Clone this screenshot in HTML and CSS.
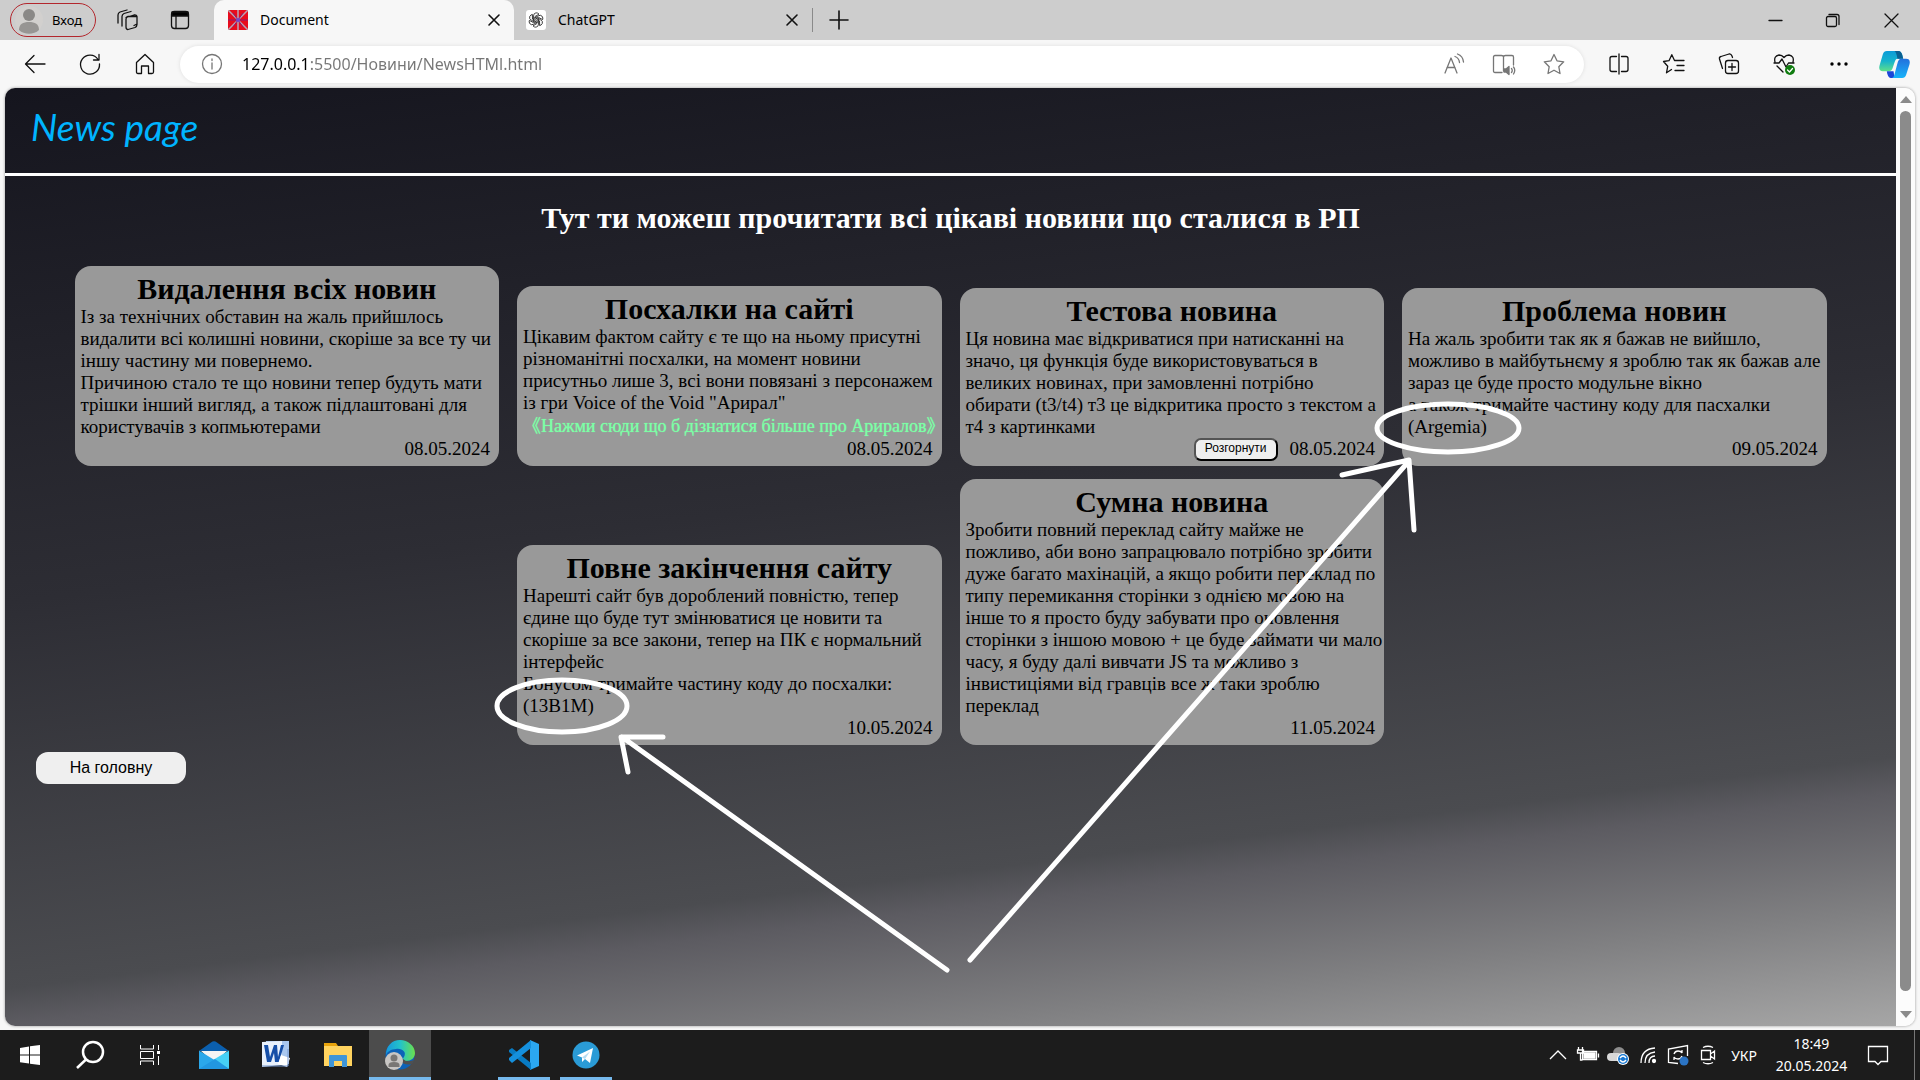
FILE: index.html
```html
<!DOCTYPE html>
<html lang="uk">
<head>
<meta charset="utf-8">
<title>Document</title>
<link rel="stylesheet" href="styles.css">
</head>
<body>
<header class="tabbar">
  <button class="profile"><svg class="avatar" viewBox="0 0 28 28"><circle cx="14" cy="14" r="14" fill="#d2d0ce"/><circle cx="14" cy="9" r="6" fill="#8a8886"/><path d="M4 24c0-6 4-8 10-8s10 2 10 8c-5 5-15 5-20 0z" fill="#979593"/></svg>Вход</button>
  <button class="tab-tool" aria-label="Workspaces"><svg class="icon" viewBox="0 0 24 24"><path d="M10 9.500l8-2.500q3-.5 3 2v7l-3 1.500M2 15V7q0-2 2-3l7-2M6 18V8.500q0-2 2-3l7-2M10 19v-8q0-2 2-2.500h4l5 0v8q0 2-2 3l-7 2q-2 0-2-2.500z"/></svg></button>
  <button class="tab-tool" aria-label="Tab actions"><svg class="icon" viewBox="0 0 24 24"><rect x="3.500" y="3.500" width="17" height="17" rx="3"/><path d="M4 4h16v4H4z" fill="#000"/><path d="M8 8v12"/></svg></button>
  <div class="tab active"><svg class="favicon" viewBox="0 0 20 20"><path d="M0 0h20v20H0z" fill="#e80c1c"/><path d="M0 0l20 20M20 0L0 20M10 0v20" stroke="#b9a5b5" stroke-width="1.500"/><path d="M0 10h20M5 3l10 14M15 3L5 17" stroke="#8b1d70" stroke-width="1"/><circle cx="10" cy="10" r="2" fill="#7545c8"/></svg><span class="tab-name">Document</span><button class="tab-close" aria-label="Close tab"><svg class="icon bold" viewBox="0 0 24 24"><path d="M7 7l10 10M17 7L7 17"/></svg></button></div>
  <div class="tab"><svg class="favicon" viewBox="0 0 20 20"><rect width="20" height="20" rx="3" fill="#fff"/><g fill="none" stroke="#222" stroke-width=".8"><path id="petal" d="M7.500 11V6q0-2.800 2.500-3.200 2 0 3 1.300L9 6.500V10"/><use href="#petal" transform="rotate(60 10 10)"/><use href="#petal" transform="rotate(120 10 10)"/><use href="#petal" transform="rotate(180 10 10)"/><use href="#petal" transform="rotate(240 10 10)"/><use href="#petal" transform="rotate(300 10 10)"/></g></svg><span class="tab-name">ChatGPT</span><button class="tab-close" aria-label="Close tab"><svg class="icon bold" viewBox="0 0 24 24"><path d="M7 7l10 10M17 7L7 17"/></svg></button></div>
  <button class="new-tab" aria-label="New tab"><svg class="icon bold" viewBox="0 0 24 24"><path d="M12 3v18M3 12h18"/></svg></button>
  <div class="window-controls">
    <button aria-label="Minimize"><svg class="icon" viewBox="0 0 24 24"><path d="M6 12.500h13"/></svg></button>
    <button aria-label="Restore"><svg class="icon" viewBox="0 0 24 24"><rect x="5.500" y="8.500" width="10" height="10" rx="1.500"/><path d="M8 6.500h8q2 0 2 2v8"/></svg></button>
    <button aria-label="Close"><svg class="icon" viewBox="0 0 24 24"><path d="M6 6l13 13M19 6L6 19"/></svg></button>
  </div>
</header>

<nav class="toolbar">
  <button aria-label="Back"><svg class="icon" viewBox="0 0 24 24"><path d="M22 12H3M11 3.500L2.500 12l8.500 8.500"/></svg></button>
  <button aria-label="Refresh"><svg class="icon" viewBox="0 0 24 24"><path d="M20 7.500A9.500 9.500 0 1 0 21.500 12M21 2.500V8h-5.500"/></svg></button>
  <button aria-label="Home"><svg class="icon" viewBox="0 0 24 24"><path d="M3.500 10.500L12 2.500l8.500 8V20q0 1.500-1.500 1.500h-3.500V14h-7v7.500H5Q3.500 21.500 3.500 20z"/></svg></button>
  <div class="omnibox">
    <svg class="icon muted" viewBox="0 0 24 24"><circle cx="12" cy="12" r="9.500"/><path d="M12 11v6M12 7v1.500"/></svg>
    <input class="address" type="text" aria-label="Address" value="127.0.0.1:5500/Новини/NewsHTMl.html">
    <div class="omni-actions">
      <button aria-label="Read aloud"><svg class="icon muted" viewBox="0 0 24 24"><path d="M3 21L9 6l6 15M5 15.500h8M13 4.500q4 1.500 4.500 6M15.500 2q5.500 2 6 8"/></svg></button>
      <button aria-label="Immersive reader"><svg class="icon muted" viewBox="0 0 24 24"><path d="M10 20.500H3q-1.500 0-1.500-1.500V5Q1.500 3.500 3 3.500h6.500q2 0 2 1.500v14M11.500 5q0-1.500 2-1.500H20q1.500 0 1.500 1.500v8M19.500 16.500q1.500 2 0 4M21.500 15q2.500 3 0 7"/><path d="M12 17h2l3-2.500v8L14 20h-2z" fill="#767676"/></svg></button>
      <button aria-label="Favourite"><svg class="icon muted" viewBox="0 0 24 24"><path d="M12 2.500l3 6.300 6.700 1-4.900 4.900 1.200 6.800-6-3.300-6 3.300 1.200-6.800-4.900-4.900 6.700-1z"/></svg></button>
    </div>
  </div>
  <button aria-label="Split screen"><svg class="icon" viewBox="0 0 24 24"><path d="M9.500 4.500H5Q3 4.500 3 6.500v11q0 2 2 2h4.500M14.500 4.500H19q2 0 2 2v11q0 2-2 2h-4.500M12 2v20"/></svg></button>
  <button aria-label="Favourites"><svg class="icon" viewBox="0 0 24 24"><path d="M9.500 17.500L4.500 20.800l1.200-6.500L1.500 9.500l5.500-.8 2.800-6 2.700 5.800H22M15 13.500h7M13 18.500h9"/></svg></button>
  <button aria-label="Collections"><svg class="icon" viewBox="0 0 24 24"><rect x="8.500" y="8.500" width="13" height="13" rx="2.500"/><path d="M15 11.500v7M11.500 15h7M5.500 16.500L2.500 7q-.5-2 1.500-2.500l8-2.500q2-.5 3 2l.5 1.500"/></svg></button>
  <button aria-label="Browser essentials"><svg class="icon" viewBox="0 0 24 24"><path d="M3 10Q1.500 4 7 3q3 0 5 2.500Q14 3 17 3q5.500 1 4 7M2 11h5l3-4 4 8 2.500-4H22M5 14l6 6"/><circle cx="18" cy="18" r="5" fill="#107c10" stroke="none"/><path d="M15.500 18l2 2 3-3.500" stroke="#fff"/></svg></button>
  <button aria-label="More"><svg class="icon" viewBox="0 0 24 24"><g fill="#000" stroke="none"><circle cx="5" cy="12" r="1.700"/><circle cx="12" cy="12" r="1.700"/><circle cx="19" cy="12" r="1.700"/></g></svg></button>
  <button aria-label="Copilot"><svg class="copilot" viewBox="0 0 32 28"><defs><linearGradient id="cp1" x2="0" y2="1"><stop stop-color="#0b9bd8"/><stop offset=".5" stop-color="#16b3cc"/><stop offset="1" stop-color="#5fe08a"/></linearGradient><linearGradient id="cp2" x2="0" y2="1"><stop stop-color="#2470dc"/><stop offset="1" stop-color="#18b4fa"/></linearGradient></defs><path d="M8 0h12q3 0 4 4l1 4h-6q-2 0-3 4l-2 6q-1 3-4 3H4q-5 0-3.500-6L4 3Q5 0 8 0z" fill="url(#cp1)"/><path d="M16 0h4q3 0 4 4l1 4h-6q-1-7-3-8z" fill="#0a6091"/><path d="M8 21h7l1 7h-4q-3 0-4-7z" fill="#1b46d8"/><path d="M24 28H13q2 0 3-4l3-11q1-5 4-5h5q5 0 3.500 6L28 25q-1 3-4 3z" fill="url(#cp2)"/></svg></button>
</nav>

<div class="frame">
  <main class="site">
    <header class="site-header"><a class="logo" href="#">News page</a></header>
    <h1 class="headline">Тут ти можеш прочитати всі цікаві новини що сталися в РП</h1>
    <section class="news">
      <article class="card"><h2>Видалення всіх новин</h2>
        <p>Із за технічних обставин на жаль прийшлось видалити всі колишні новини, скоріше за все ту чи іншу частину ми повернемо.<br>Причиною стало те що новини тепер будуть мати трішки інший вигляд, а також підлаштовані для користувачів з копмьютерами</p>
        <footer class="meta"><time>08.05.2024</time></footer></article>
      <article class="card"><h2>Посхалки на сайті</h2>
        <p>Цікавим фактом сайту є те що на ньому присутні різноманітні посхалки, на момент новини присутньо лише 3, всі вони повязані з персонажем із гри Voice of the Void "Арирал"</p>
        <a class="more" href="#">《Нажми сюди що б дізнатися більше про Ариралов》</a>
        <footer class="meta"><time>08.05.2024</time></footer></article>
      <article class="card"><h2>Тестова новина</h2>
        <p>Ця новина має відкриватися при натисканні на значо, ця функція буде використовуваться в великих новинах, при замовленні потрібно<br>обирати (t3/t4) т3 це відкритика просто з текстом а т4 з картинками</p>
        <footer class="meta"><button class="expand">Розгорнути</button><time>08.05.2024</time></footer></article>
      <article class="card"><h2>Проблема новин</h2>
        <p>На жаль зробити так як я бажав не вийшло, можливо в майбутьнєму я зроблю так як бажав але зараз це буде просто модульне вікно<br>а також тримайте частину коду для пасхалки (Argemia)</p>
        <footer class="meta"><time>09.05.2024</time></footer></article>
      <article class="card"><h2>Повне закінчення сайту</h2>
        <p>Нарешті сайт був дороблений повністю, тепер єдине що буде тут змінюватися це новити та скоріше за все закони, тепер на ПК є нормальний інтерфейс<br>Бонусом тримайте частину коду до посхалки: (13B1M)</p>
        <footer class="meta"><time>10.05.2024</time></footer></article>
      <article class="card"><h2>Сумна новина</h2>
        <p>Зробити повний переклад сайту майже не<br>пожливо, аби воно запрацювало потрібно зробити<br>дуже багато махінацій, а якщо робити переклад по<br>типу перемикання сторінки з однією мовою на<br>інше то я просто буду забувати про оновлення<br>сторінки з іншою мовою + це буде займати чи мало<br>часу, я буду далі вивчати JS та можливо з<br>інвистиціями від гравців все ж таки зроблю<br>переклад</p>
        <footer class="meta"><time>11.05.2024</time></footer></article>
    </section>
    <button class="home">На головну</button>
  </main>
  <div class="scrollbar"><span class="arrow-up"></span><span class="thumb"></span><span class="arrow-down"></span></div>
</div>

<svg class="marks" viewBox="0 0 1920 1080"><g fill="none" stroke="#fff" stroke-width="5" stroke-linecap="round" stroke-linejoin="round"><ellipse cx="1448" cy="428" rx="71" ry="24"/><ellipse cx="562" cy="706" rx="65" ry="26"/><path d="M947 970L622 737M663 737h-42l7 35M970 960L1409 461M1342 475l67-15 5 70"/></g></svg>

<footer class="taskbar">
  <button class="sys" aria-label="Start"><svg viewBox="0 0 30 30"><path d="M5 8l9-1.500V14.500H5zM15 6.300L25 5v9.500H15zM5 15.500h9v8L5 22.300zM15 15.500h10V25l-10-1.300z" fill="#fff"/></svg></button>
  <button class="sys" aria-label="Search"><svg viewBox="0 0 30 30"><circle cx="18" cy="12" r="10" fill="none" stroke="#fff" stroke-width="2.500"/><path d="M11 19.500L2 28" stroke="#fff" stroke-width="2.500"/></svg></button>
  <button class="sys" aria-label="Task view"><svg viewBox="0 0 30 30"><path d="M5.500 5v4h13V5M5.500 25v-4h13v4M5.500 11.500h13v7h-13zM23.500 5v5M23.500 16v9" fill="none" stroke="#fff"/><path d="M22 11h3v3h-3z" fill="#fff"/></svg></button>
  <div class="apps">
    <button aria-label="Mail"><svg viewBox="0 0 30 30"><path d="M0 11L12 2.500Q15 0 18 2.500L30 11z" fill="#0b5fae"/><path d="M2 11h26L15 23z" fill="#f4f4f4"/><path d="M0 10.500L30 29H0z" fill="#2ba7ea"/><path d="M30 10.500V29L14 20z" fill="#46d0f5"/><path d="M0 29l16-10 14 10z" fill="#2297e0"/></svg></button>
    <button aria-label="Word"><svg viewBox="0 0 30 30"><path d="M5 1h23v23H5z" fill="#a9c7ef"/><path d="M1 2l20-1v24L1 27z" fill="#e9f1fc"/><path d="M3 5h4l2 12 4-12h3l1 12 3-12h3l-5 17h-4l-1-9-3 9H6z" fill="#164fa8"/><path d="M20 15l9 3-3 9-9-3z" fill="#fff"/><path d="M1 26h26V9" fill="none" stroke="#7396cf"/></svg></button>
    <button aria-label="Explorer"><svg viewBox="0 0 30 30"><path d="M1 3h12l2 3h14v18H1z" fill="#e8a30c"/><path d="M1 6h28v20H1z" fill="#ffd35f"/><path d="M6 27V16q0-1 1-1h16q1 0 1 1v11h-5v-6h-8v6z" fill="#3f95d7"/></svg></button>
    <button class="current" aria-label="Edge"><svg viewBox="0 0 30 30"><defs><linearGradient id="ed"><stop stop-color="#1797dd"/><stop offset=".5" stop-color="#24c3c8"/><stop offset="1" stop-color="#6be04c"/></linearGradient></defs><circle cx="15" cy="15" r="14.500" fill="#0c62b8"/><path d="M1 15C1 6 7 0 15 0s15 6 15 13c0 5-4 8-9 8-3 0-4-2-2-4 3-5-2-9-8-8-5 0-9 3-10 6z" fill="url(#ed)"/><path d="M18 19q4 4 11 1l-2 4q-8 2-12-4z" fill="#505050"/><circle cx="9" cy="21" r="9" fill="#c8c6c4"/><circle cx="9" cy="18" r="3.500" fill="#797775"/><path d="M3.500 27v-2q0-3 5.500-3t5.500 3v2z" fill="#797775"/></svg></button>
    <button class="idle" aria-label="Empty slot" disabled></button>
    <button class="running" aria-label="Visual Studio Code"><svg viewBox="0 0 30 30"><path d="M21 0L30 4v22l-9 4z" fill="#2ba7f1"/><path d="M0 10l3-2 19 15v7L0 12z" fill="#087bc3"/><path d="M0 20l3 3L22 8V0L0 18z" fill="#1590dd"/></svg></button>
    <button class="running" aria-label="Telegram"><svg viewBox="0 0 30 30"><circle cx="15" cy="15" r="13.500" fill="#2a9bd6"/><path d="M6 15.500L22 8l-3 15-5-4-3 3v-4.500z" fill="#fff"/><path d="M11 17.500l8-6-5 7.500z" fill="#b6dcf2"/></svg></button>
  </div>
  <div class="tray">
    <svg viewBox="0 0 24 24"><path d="M4 16l8-8 8 8"/></svg>
    <svg viewBox="0 0 24 24"><path d="M6.500 8.500h14v8h-14zM2.500 4v3M6.500 4v3M1.500 7h6v3h-6zM4.500 10v7h2M22.500 10.500v4"/><path d="M8 10h11v5H8z" fill="#fff"/></svg>
    <svg viewBox="0 0 24 24"><g stroke="none"><circle cx="13" cy="10" r="6" fill="#8e8e8e"/><rect x="1" y="10" width="15" height="8" rx="4" fill="#d8d8d8"/><circle cx="17" cy="16" r="6" fill="#fff"/><circle cx="17" cy="16" r="5" fill="#1677d2"/></g><path d="M14 15q3-4 6 0M20 17q-3 4-6 0"/></svg>
    <svg viewBox="0 0 24 24"><path d="M5 20Q5 6 19 5M9 20q0-10 10-11M13 20q0-7 6-7"/><circle cx="18" cy="18" r="1.500" fill="#fff"/></svg>
    <svg viewBox="0 0 24 24"><path d="M12 20.500l-9.500-1V6l19-3.500V13M8 11q1-3 4-3t4 2V7M16 13q-1 3-4 3t-4-2v3"/><circle cx="18" cy="18" r="4.500" fill="#2b74c4" stroke="none"/></svg>
    <svg viewBox="0 0 24 24"><path d="M5.500 7.500h9v9h-9zM14.500 11l4-3v8l-4-3M7 4.500Q12 2 17 4.500M7 19.500q5 2.500 10 0"/></svg>
    <span class="lang">УКР</span>
    <div class="clock"><time>18:49</time><time>20.05.2024</time></div>
    <svg class="notice" viewBox="0 0 24 24"><path d="M2.500 3.500h19v15H15l-3 3-3-3H2.500z"/></svg>
  </div>
</footer>
</body>
</html>
```
FILE: styles.css
```css
* { box-sizing: border-box; }
body {
  margin: 0;
  min-height: 100vh;
  display: flex;
  flex-direction: column;
  position: relative;
  background: #f7f7f7;
  color: #000;
  font-family: "Liberation Serif", "Noto Sans CJK JP", serif;
}
button { padding: 0; border: 0; background: none; color: inherit; font: inherit; }
svg { display: block; flex: none; }
p, h1, h2 { margin: 0; }
.icon { width: 24px; height: 24px; fill: none; stroke: #111; stroke-width: 1.3; stroke-linejoin: round; stroke-linecap: round; }
.muted { stroke: #767676; }
.bold { stroke-width: 1.6; }

.tabbar, .toolbar, .taskbar { font-family: "Noto Sans", sans-serif; display: flex; align-items: center; }
.tabbar { height: 40px; padding-left: 10px; background: #cdcdcd; font-size: 14px; }
.profile {
  display: flex; align-items: center; gap: 9px;
  width: 86px; height: 34px; padding-left: 4px;
  border: 1px solid #b3272d; border-radius: 17px;
  font-size: 13px;
}
.avatar { width: 28px; height: 28px; }
.tab-tool { width: 24px; margin-left: 20px; }
.tab-tool + .tab-tool { margin: 0 22px 0 28px; }
.tab { display: flex; align-items: center; gap: 12px; height: 40px; width: 298px; padding: 0 8px 0 12px; }
.tab.active { width: 300px; padding-left: 14px; background: #f7f7f7; border-radius: 10px 10px 0 0; }
.favicon { width: 20px; height: 20px; }
.tab-name { flex: 1; padding-bottom: 2px; }
.tab-close .icon { width: 24px; height: 24px; }
.new-tab { padding-left: 14px; border-left: 1px solid #8a8a8a; }
.window-controls { display: flex; margin-left: auto; }
.window-controls button { display: grid; place-items: center; width: 58px; height: 40px; }

.toolbar { height: 48px; gap: 15px; padding: 0 6px 0 15px; }
.toolbar button { display: grid; place-items: center; width: 40px; height: 36px; flex: none; }
.copilot { width: 31px; height: 27px; }
.omnibox {
  flex: 1; min-width: 0; height: 37px;
  display: flex; align-items: center; gap: 18px;
  padding: 0 10px 0 20px;
  background: #fff; border-radius: 19px;
  box-shadow: 0 0 4px #0000001a;
}
.address {
  flex: 1; min-width: 0; padding: 0; border: 0; outline: 0;
  font: 16px/24px "Noto Sans", sans-serif;
  color: transparent;
  background: linear-gradient(90deg, #000 67px, #767676 67px);
  background-clip: text;
}
.omni-actions { display: flex; gap: 10px; }

.frame { flex: 1; display: flex; margin: 0 5px 4px; border-radius: 10px; overflow: hidden; box-shadow: 0 0 3px #00000066; }
.site {
  flex: 1; min-width: 0;
  background: linear-gradient(173deg, #15151e, #2d2d34 44%, #4b4c50 77%, #5c5b61 80%, #808082 90%, #a6a6a6);
}
.site-header { height: 88px; padding: 16px 26px; border-bottom: 3px solid #fff; }
.logo { color: #00b4ff; font: italic 37px/46px Lato, sans-serif; text-decoration: none; }
.headline { padding: 24px 0 31px; color: #fff; font-size: 30px; line-height: 35px; text-align: center; }
.news { display: flex; flex-wrap: wrap; justify-content: center; align-items: flex-end; gap: 13px 18px; padding: 0 69px; }
.card { flex: 0 0 calc((100% - 55px) / 4); min-width: 0; padding: 6px 0 6px 6px; border-radius: 16px; background: #999; font-size: 19px; line-height: 22px; }
.card h2 { padding-right: 6px; font-size: 30px; line-height: 34px; text-align: center; }
.more { display: block; padding-right: 6px; color: #7dffa6; font-size: 18px; line-height: 24px; text-align: center; text-decoration: none; white-space: nowrap; text-shadow: 0 0 1px #7dffa6; }
.meta { display: flex; justify-content: flex-end; gap: 12px; height: 22px; padding-right: 9px; }
.expand {
  height: 23px; padding: 0 9px 4px;
  border: 2px outset #000; border-radius: 7px; background: #efefef;
  font: 12px/16px "Liberation Sans", sans-serif;
}
.home {
  display: block; width: 150px; height: 32px; margin: 7px 31px;
  border-radius: 12px; background: #efefef;
  font: 16px/32px "Liberation Sans", sans-serif;
}
.scrollbar { width: 19px; display: flex; flex-direction: column; align-items: center; gap: 8px; padding: 8px 0; background: #fcfcfc; }
.thumb { flex: 1; width: 11px; margin-bottom: 12px; border-radius: 6px; background: #8b8b8b; }
.arrow-up, .arrow-down { border: 6px solid transparent; border-top: 0; border-bottom: 7px solid #8b8b8b; }
.arrow-down { border-bottom: 0; border-top: 7px solid #8b8b8b; }

.marks { position: absolute; top: 0; left: 0; width: 100%; pointer-events: none; }

.taskbar { height: 50px; background: #1c1c1c; color: #fff; }
.taskbar button { display: grid; place-items: center; height: 50px; width: 62px; }
.taskbar .sys { width: 60px; }
.taskbar button svg { width: 30px; height: 30px; }
.apps { display: flex; margin-left: 3px; }
.apps .current { background: #4c4c4c; border-bottom: 3px solid #76b9ed; padding-top: 3px; }
.apps .running { width: 52px; margin: 0 5px; border-bottom: 3px solid #76b9ed; padding-top: 3px; }
.tray { display: flex; align-items: center; gap: 6px; height: 50px; margin-left: auto; padding-right: 24px; margin-right: 5px; border-right: 1px solid #777; }
.tray svg { width: 24px; height: 24px; fill: none; stroke: #fff; stroke-width: 1.3; }
.lang { margin-left: 5px; font-size: 14px; }
.clock { display: flex; flex-direction: column; align-items: center; width: 97px; font-size: 14px; line-height: 22px; }
```
